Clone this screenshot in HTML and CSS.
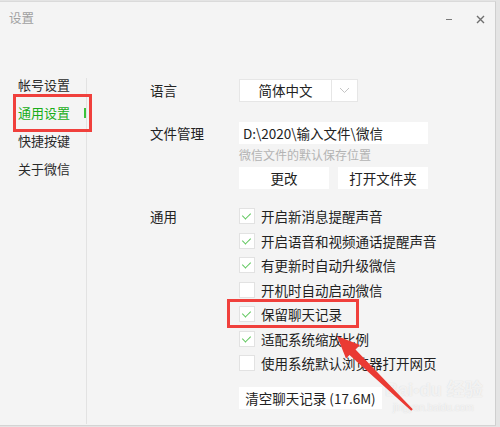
FILE: index.html
```html
<!DOCTYPE html>
<html lang="zh-CN">
    <head>
        <meta charset="UTF-8">
        <meta name="viewport" content="width=device-width, initial-scale=1.0">
        <title>设置</title>
        <link rel="stylesheet" href="styles.css">
    </head>
    <body>
        <div class="window">
            <div class="titlebar">
                <span class="title">设置</span>
                <div class="win-buttons">
                    <span class="btn-min"></span>
                    <svg class="btn-close" width="9" height="9" viewBox="0 0 9 9"><path d="M1 1L8 8M8 1L1 8" stroke="#6f6f6f" stroke-width="1.4"/></svg>
                </div>
            </div>
            <div class="main">
                <ul class="nav">
                    <li>帐号设置</li>
                    <li class="active">通用设置<span class="active-bar"></span><span class="note-box"></span></li>
                    <li>快捷按键</li>
                    <li>关于微信</li>
                </ul>
                <div class="content">
                    <div class="row lang-row">
                        <div class="label">语言</div>
                        <div class="select">
                            <span class="select-value">简体中文</span>
                            <span class="select-arrow">
                                <svg width="11" height="7" viewBox="0 0 11 7"><path d="M1 1L5.5 5.5L10 1" fill="none" stroke="#c4c4c4" stroke-width="1"/></svg>
                            </span>
                        </div>
                    </div>
                    <div class="row file-row">
                        <div class="label">文件管理</div>
                        <div class="field">
                            <div class="path">D:\2020\输入文件\微信</div>
                            <div class="hint">微信文件的默认保存位置</div>
                            <div class="btn-group">
                                <button class="plain-btn">更改</button>
                                <button class="plain-btn">打开文件夹</button>
                            </div>
                        </div>
                    </div>
                    <div class="row general-row">
                        <div class="label">通用</div>
                        <div class="field">
                            <ul class="checks">
                                <li class="checked"><span class="box"></span>开启新消息提醒声音</li>
                                <li class="checked"><span class="box"></span>开启语音和视频通话提醒声音</li>
                                <li class="checked"><span class="box"></span>有更新时自动升级微信</li>
                                <li><span class="box"></span>开机时自动启动微信</li>
                                <li class="checked"><span class="box"></span>保留聊天记录<span class="note-box"></span></li>
                                <li class="checked"><span class="box"></span>适配系统缩放比例</li>
                                <li><span class="box"></span>使用系统默认浏览器打开网页</li>
                            </ul>
                            <button class="plain-btn clear-btn">清空聊天记录 (17.6M)</button>
                        </div>
                    </div>
                </div>
            </div>
            <div class="watermark">
                <div class="wm-logo">Bai<span class="wm-paw">&#9679;</span>du 经验</div>
                <div class="wm-url">jingyan.baidu.com</div>
            </div>
            <svg class="note-arrow" width="500" height="427" viewBox="0 0 500 427">
                <polygon points="337,336 360,345 355.5,349.5 412.8,409.2 411.2,410.8 349.5,355 346,358.5" fill="#ea3a33"/>
            </svg>
        </div>
    </body>
</html>
```

FILE: styles.css
```css
* {
    box-sizing: border-box;
}
body {
    margin: 0;
    padding-top: 1px;
    width: 500px;
    height: 427px;
    background-color: #e4e4e4;
    font-family: "Noto Sans CJK SC", "Microsoft YaHei", sans-serif;
    color: #222;
    overflow: hidden;
}
.window {
    position: relative;
    width: 496px;
    height: 425px;
    background-color: #f4f4f4;
    border-top: 1px solid #dadada;
    border-right: 1px solid #cfcfcf;
    border-bottom: 1px solid #d4d4d4;
}
.titlebar {
    display: flex;
    justify-content: space-between;
    height: 69px;
    padding: 6px 0 0 9px;
}
.title {
    font-size: 12.5px;
    line-height: 20px;
    color: #a0a0a0;
}
.win-buttons {
    display: flex;
    align-items: center;
    gap: 24px;
    height: 12px;
    margin-top: 5px;
    padding-right: 10px;
}
.btn-min {
    width: 6px;
    height: 1px;
    background-color: #7a7a7a;
}
.main {
    display: flex;
    height: 353px;
}
.nav {
    list-style: none;
    margin: 0;
    padding: 0;
    width: 86px;
    font-size: 13px;
}
.nav li {
    position: relative;
    height: 28px;
    line-height: 28px;
    padding-left: 18px;
    color: #2a2a2a;
}
.nav li.active {
    color: #1aad19;
}
.active-bar {
    position: absolute;
    right: 0;
    top: 9px;
    width: 2px;
    height: 10px;
    background-color: #3cc13b;
}
.note-box {
    position: absolute;
    border: 3px solid #f0403c;
    pointer-events: none;
}
.nav .note-box {
    left: 13px;
    top: -5px;
    width: 79px;
    height: 38px;
}
.content {
    flex: 1;
    margin-top: 7px;
    border-left: 1px solid #e2e2e2;
    padding: 1px 0 0 63px;
    font-size: 13.5px;
}
.row {
    display: flex;
}
.label {
    width: 89px;
    flex-shrink: 0;
    line-height: 23px;
}
.select {
    display: flex;
    width: 119px;
    height: 23px;
    background-color: #fff;
    border: 1px solid #e6e6e6;
}
.select-value {
    width: 92px;
    text-align: center;
    line-height: 21px;
    border-right: 1px solid #e6e6e6;
}
.select-arrow {
    flex: 1;
    display: flex;
    align-items: center;
    justify-content: center;
}
.file-row {
    margin-top: 20px;
}
.file-row .label {
    line-height: 22px;
}
.path {
    width: 189px;
    height: 22px;
    line-height: 22px;
    padding-left: 4px;
    background-color: #fff;
    white-space: nowrap;
}
.hint {
    margin-top: 4px;
    font-size: 12px;
    line-height: 14px;
    color: #b3b3b3;
}
.btn-group {
    display: flex;
    gap: 9px;
    margin-top: 5px;
}
.plain-btn {
    height: 22px;
    width: 90px;
    padding: 0;
    border: none;
    background-color: #fff;
    font-family: inherit;
    font-size: 13.5px;
    color: #222;
}
.general-row {
    margin-top: 15px;
}
.general-row .label {
    line-height: 24.5px;
}
.checks {
    list-style: none;
    margin: 0;
    padding: 0;
}
.checks li {
    position: relative;
    display: flex;
    align-items: center;
    gap: 6px;
    height: 24.5px;
    white-space: nowrap;
}
.box {
    position: relative;
    width: 16px;
    height: 16px;
    background-color: #fff;
    border: 1px solid #e2e2e2;
}
.checked .box::after {
    content: "";
    position: absolute;
    left: 4px;
    top: 2px;
    width: 4px;
    height: 7px;
    border-right: 1.3px solid #5cc65a;
    border-bottom: 1.3px solid #5cc65a;
    transform: rotate(45deg);
}
.checks .note-box {
    left: -12px;
    top: -3px;
    width: 132px;
    height: 29px;
}
.clear-btn {
    width: 143px;
    margin-top: 11px;
}
.watermark {
    position: absolute;
    left: 385px;
    top: 378px;
    color: rgba(255, 255, 255, 0.7);
    text-shadow: 0 0 1px rgba(180, 180, 180, 0.5);
    font-family: "Liberation Sans", "Noto Sans CJK SC", sans-serif;
    pointer-events: none;
}
.wm-logo {
    font-size: 18px;
    font-weight: bold;
    line-height: 20px;
}
.wm-paw {
    font-size: 11px;
    vertical-align: top;
}
.wm-url {
    margin-top: 2px;
    font-size: 10px;
    line-height: 12px;
    padding-left: 8px;
}
.note-arrow {
    position: absolute;
    left: 0;
    top: -2px;
    pointer-events: none;
}
```
